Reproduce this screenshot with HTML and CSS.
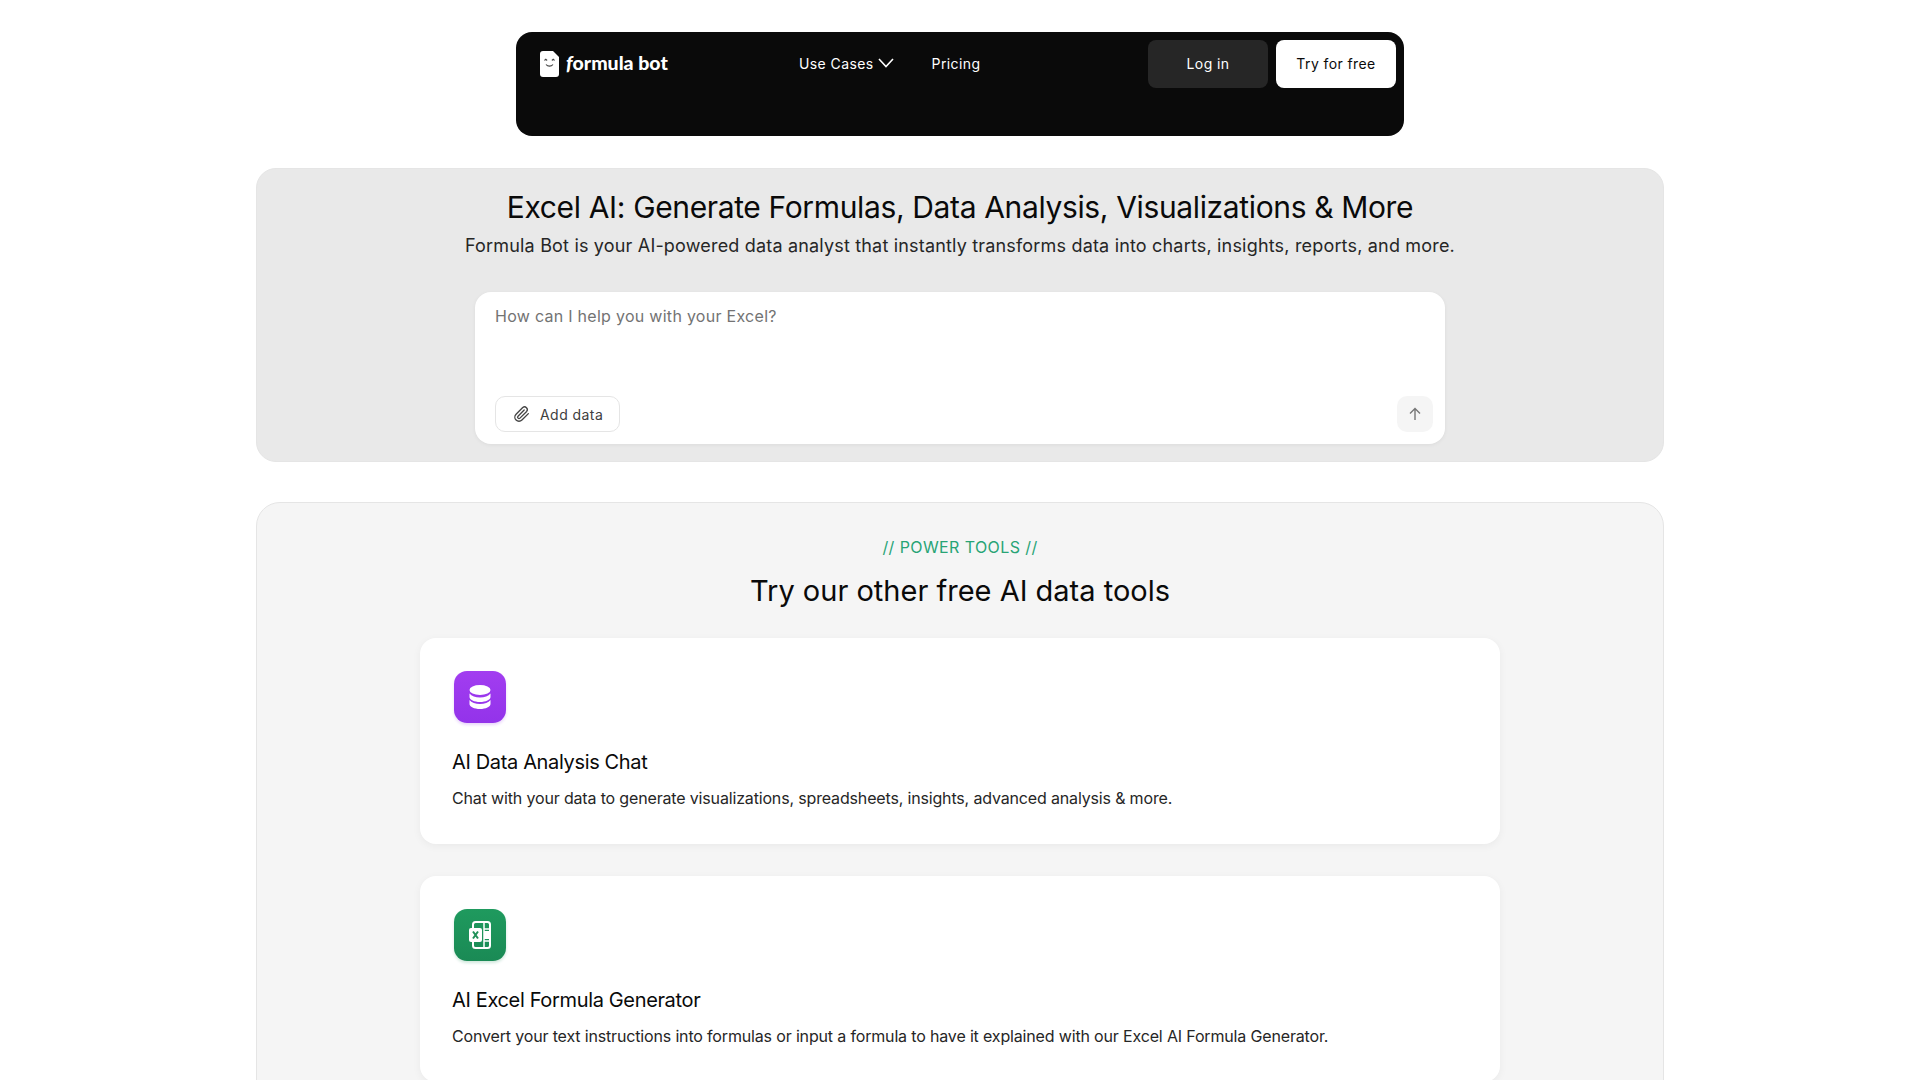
FILE: index.html
```html
<!DOCTYPE html>
<html lang="en">

<head>
    <meta charset="UTF-8">
    <meta name="viewport" content="width=device-width, initial-scale=1.0">
    <title>Formula Bot</title>
    <link rel="stylesheet" href="styles.css">
</head>

<body>
    <div id="page">
        <header class="nav">
            <a class="logo" href="#">
                <svg class="logo_icon" viewBox="0 0 19 26" width="19" height="26">
                    <path d="M3 0H13L19 6V23a3 3 0 0 1-3 3H3a3 3 0 0 1-3-3V3a3 3 0 0 1 3-3Z" fill="#fff" />
                    <path d="M4.500 9.500l1.300-1.300 1.300 1.300M11.900 9.500l1.300-1.300 1.300 1.300M6 13.500c1.800 2.200 5.200 2.200 7 0" fill="none" stroke="#444" stroke-width="1.100" />
                </svg>
                <span class="logo_f">f</span><span class="logo_text">ormula bot</span>
            </a>
            <nav class="menu">
                <a href="#" class="menu_item">Use Cases
                    <svg viewBox="0 0 16 10" width="16" height="10">
                        <path d="M1 1l7 7.500L15 1" fill="none" stroke="#fff" stroke-width="1.600" />
                    </svg>
                </a>
                <a href="#" class="menu_item">Pricing</a>
            </nav>
            <div class="nav_btns">
                <a href="#" class="btn btn_dark">Log in</a>
                <a href="#" class="btn btn_light">Try for free</a>
            </div>
        </header>

        <section class="hero">
            <h1>Excel AI: Generate Formulas, Data Analysis, Visualizations &amp; More</h1>
            <p class="hero_sub">Formula Bot is your AI-powered data analyst that instantly transforms data into charts, insights, reports, and more.</p>
            <div class="ask">
                <div class="ask_text">How can I help you with your Excel?</div>
                <div class="ask_row">
                    <button class="add_btn">
                        <svg viewBox="0 0 24 24" width="18" height="18">
                            <path d="M20.500 11.500l-8.600 8.600a5.500 5.500 0 0 1-7.800-7.800l8.900-8.900a3.700 3.700 0 0 1 5.200 5.200l-8.900 8.900a1.800 1.800 0 0 1-2.600-2.600l8.200-8.200" fill="none" stroke="#444" stroke-width="1.800" stroke-linecap="round" stroke-linejoin="round" />
                        </svg>
                        Add data
                    </button>
                    <button class="send_btn">
                        <svg viewBox="0 0 16 16" width="16" height="16">
                            <path d="M8 14V2.500M3 7.500l5-5 5 5" fill="none" stroke="#777" stroke-width="1.400" />
                        </svg>
                    </button>
                </div>
            </div>
        </section>

        <section class="tools">
            <div class="tools_tag">// POWER TOOLS //</div>
            <h2>Try our other free AI data tools</h2>
            <div class="tool_list">
                <div class="tool_card">
                    <div class="tool_icon purple">
                        <svg viewBox="0 0 22 24" width="22" height="24" fill="#fff">
                            <ellipse cx="11" cy="5" rx="10.500" ry="5" />
                            <path d="M.5 8.500v3.500c0 2.800 4.700 5 10.500 5s10.500-2.200 10.500-5V8.500c-2 2.800-6 4-10.500 4S2.500 11.300.5 8.500Z" />
                            <path d="M.5 15v4c0 2.800 4.700 5 10.500 5s10.500-2.200 10.500-5v-4c-2 2.800-6 4-10.500 4S2.500 17.800.5 15Z" />
                        </svg>
                    </div>
                    <h3>AI Data Analysis Chat</h3>
                    <p>Chat with your data to generate visualizations, spreadsheets, insights, advanced analysis &amp; more.</p>
                </div>
                <div class="tool_card">
                    <div class="tool_icon green">
                        <svg viewBox="0 0 22 28" width="22" height="28">
                            <rect x="4" y="1" width="17" height="26" rx="2.500" fill="none" stroke="#fff" stroke-width="2" />
                            <path d="M15 1v26M15 8h6M15 20h6" stroke="#fff" stroke-width="1.500" fill="none" />
                            <rect x="15" y="10" width="6" height="8" fill="#fff" />
                            <rect x="0" y="7" width="13" height="14" rx="2" fill="#fff" />
                            <path d="M4 10.500l5 7M9 10.500l-5 7" stroke="#1f9058" stroke-width="2" fill="none" />
                        </svg>
                    </div>
                    <h3>AI Excel Formula Generator</h3>
                    <p>Convert your text instructions into formulas or input a formula to have it explained with our Excel AI Formula Generator.</p>
                </div>
            </div>
        </section>
    </div>
</body>

</html>
```

FILE: styles.css
```css
* {
    margin: 0;
    padding: 0;
    box-sizing: border-box;
}

html,
body {
    height: 1080px;
    overflow: hidden;
    background-color: #fff;
}

a {
    text-decoration: none;
}

button {
    border: none;
    background: none;
    font-family: inherit;
}

#page {
    font-family: "Inter", "Liberation Sans", sans-serif;
    color: #0a0a0a;
    display: flex;
    flex-direction: column;
    align-items: center;
    padding-top: 32px;
}

.nav {
    width: 888px;
    height: 104px;
    background-color: #0a0a0a;
    border-radius: 16px;
    display: flex;
    align-items: flex-start;
    padding: 8px 8px 0 24px;
}

.logo {
    width: 259px;
    height: 45px;
    display: flex;
    align-items: center;
    color: #fff;
    font-family: "Lato", sans-serif;
    font-weight: 900;
    font-size: 19.5px;
}

.logo_icon {
    margin: 3px 7px 0 0;
}

.logo_f {
    font-style: italic;
}

.menu {
    height: 46px;
    flex: 1;
    display: flex;
    align-items: center;
    gap: 38px;
}

.menu_item {
    color: #fff;
    font-size: 14px;
    letter-spacing: 0.4px;
    display: flex;
    align-items: center;
    gap: 4px;
}

.nav_btns {
    display: flex;
    gap: 8px;
}

.btn {
    width: 120px;
    height: 48px;
    padding-bottom: 2px;
    border-radius: 8px;
    font-size: 14px;
    letter-spacing: 0.4px;
    display: flex;
    align-items: center;
    justify-content: center;
}

.btn_dark {
    background-color: #262626;
    color: #fff;
}

.btn_light {
    background-color: #fff;
    color: #0a0a0a;
}

.hero {
    width: 1408px;
    height: 294px;
    margin-top: 32px;
    background-color: #e9e9e9;
    border: 1px solid #e5e5e5;
    border-radius: 20px;
    display: flex;
    flex-direction: column;
    align-items: center;
    padding-top: 18px;
}

.hero h1 {
    font-size: 30px;
    line-height: 40px;
    font-weight: 400;
    letter-spacing: -0.36px;
    color: #0a0a0a;
}

.hero_sub {
    margin-top: 5px;
    font-size: 18px;
    line-height: 28px;
    letter-spacing: 0.18px;
    color: #262626;
}

.ask {
    width: 970px;
    height: 152px;
    margin-top: 32px;
    background-color: #fff;
    border-radius: 16px;
    box-shadow: 0 1px 4px rgba(0, 0, 0, 0.06);
    display: flex;
    flex-direction: column;
    justify-content: space-between;
    padding: 12px 12px 12px 20px;
}

.ask_text {
    font-size: 16px;
    line-height: 24px;
    letter-spacing: 0.28px;
    color: #737373;
}

.ask_row {
    display: flex;
    justify-content: space-between;
    align-items: center;
}

.add_btn {
    width: 125px;
    height: 36px;
    border: 1px solid #e5e5e5;
    border-radius: 10px;
    font-size: 14px;
    letter-spacing: 0.45px;
    color: #404040;
    display: flex;
    align-items: center;
    gap: 9px;
    padding-left: 17px;
}

.send_btn {
    width: 36px;
    height: 36px;
    background-color: #f5f5f5;
    border-radius: 10px;
    display: flex;
    align-items: center;
    justify-content: center;
}

.tools {
    width: 1408px;
    height: 700px;
    margin-top: 40px;
    background-color: #f5f5f5;
    border: 1px solid #e5e5e5;
    border-radius: 24px;
    display: flex;
    flex-direction: column;
    align-items: center;
    padding-top: 32px;
}

.tools_tag {
    font-size: 16px;
    line-height: 24px;
    letter-spacing: 0.4px;
    color: #28a475;
}

.tools h2 {
    margin-top: 12px;
    font-size: 29px;
    line-height: 40px;
    font-weight: 400;
    color: #0a0a0a;
}

.tool_list {
    width: 1080px;
    margin-top: 27px;
    display: flex;
    flex-direction: column;
    gap: 32px;
}

.tool_card {
    height: 206px;
    background-color: #fff;
    border-radius: 16px;
    box-shadow: 0 2px 8px rgba(0, 0, 0, 0.05);
    padding: 32px;
}

.tool_icon {
    width: 52px;
    height: 52px;
    margin: 1px 2px;
    border-radius: 13px;
    display: flex;
    align-items: center;
    justify-content: center;
}

.purple {
    background: linear-gradient(#a23df0, #9333ea);
    box-shadow: 0 2px 3px rgba(147, 51, 234, 0.2);
}

.green {
    background: linear-gradient(#1f9a5e, #1a8a55);
    box-shadow: 0 2px 3px rgba(26, 138, 85, 0.2);
}

.tool_card h3 {
    margin-top: 25px;
    font-size: 20px;
    line-height: 28px;
    font-weight: 400;
    letter-spacing: -0.35px;
    color: #0a0a0a;
}

.tool_card p {
    margin-top: 10px;
    font-size: 16px;
    line-height: 24px;
    letter-spacing: -0.16px;
    color: #262626;
}
```
